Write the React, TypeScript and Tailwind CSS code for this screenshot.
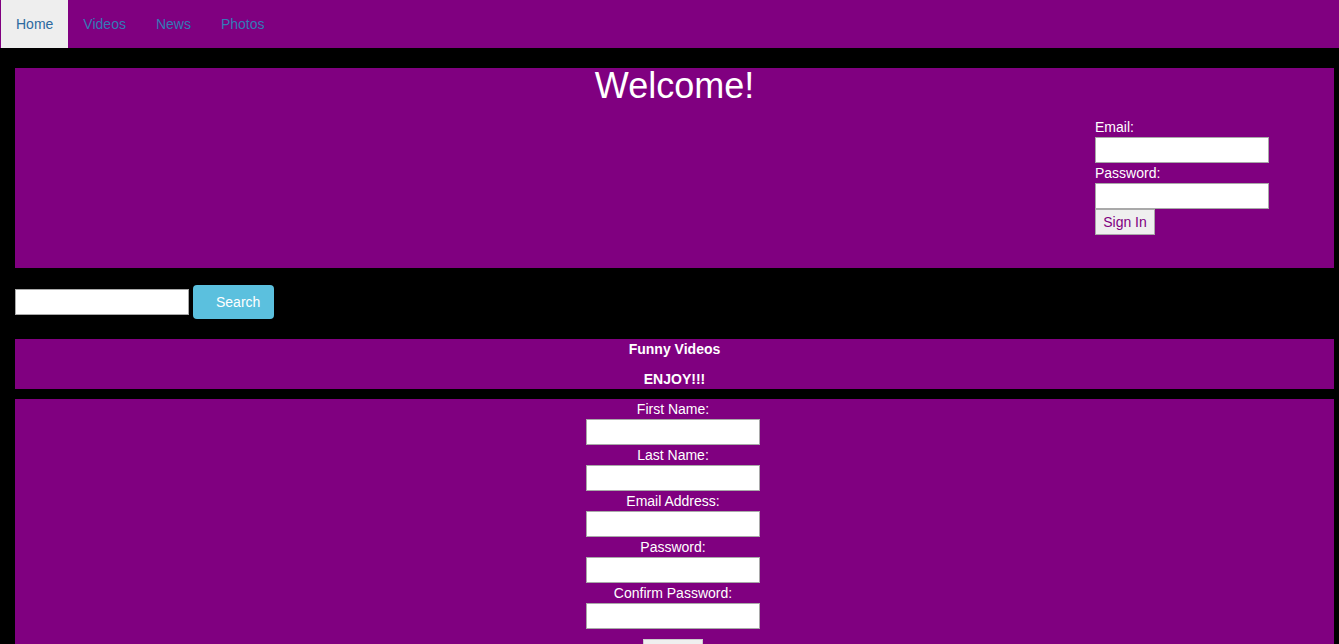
const navItems = ['Home', 'Videos', 'News', 'Photos'];

const signupFields = ['First Name:', 'Last Name:', 'Email Address:', 'Password:', 'Confirm Password:'];

function TextBox({ type = 'text' }: { type?: string }) {
  return (
    <input
      type={type}
      className="block w-[174px] h-[26px] bg-white border border-[#a9a9a9] outline-none px-1 text-black text-[14px]"
    />
  );
}

export default function App() {
  return (
    <div className="min-h-screen bg-black text-white text-[14px] font-['Liberation_Sans',Arial,sans-serif]">
      {/* Top nav */}
      <nav className="h-[48px] bg-[#800080] flex pl-[1px]">
        {navItems.map((item, i) => (
          <a
            key={item}
            href="#"
            className={
              i === 0
                ? 'h-[48px] px-[15px] py-[14px] leading-[20px] bg-[#eeeeee] text-[#2c6aa0]'
                : 'h-[48px] px-[15px] py-[14px] leading-[20px] text-[#337ab7]'
            }
          >
            {item}
          </a>
        ))}
      </nav>

      <main className="pt-[20px] pl-[15px] pr-[5px]">
        {/* Welcome + sign in */}
        <section className="h-[200px] bg-[#800080]">
          <h1 className="text-[36px] leading-[36px] font-normal text-center">Welcome!</h1>
          <div className="flex justify-end pr-[65px] mt-[13px]">
            <form className="w-[174px] flex flex-col items-start">
              <label className="leading-[20px]">Email:</label>
              <TextBox type="email" />
              <label className="leading-[20px]">Password:</label>
              <TextBox type="password" />
              <button
                type="button"
                className="w-[60px] h-[26px] bg-[#efefef] border border-[#a9a9a9] text-[#800080] text-[14px] leading-[20px]"
              >
                Sign In
              </button>
            </form>
          </div>
        </section>

        {/* Search */}
        <div className="mt-[17px] h-[34px] flex items-center gap-[4px]">
          <TextBox />
          <button
            type="button"
            className="w-[81px] h-[34px] rounded-[4px] bg-[#5bc0de] text-white pl-[23px] pr-[14px] text-left leading-[20px]"
          >
            Search
          </button>
        </div>

        {/* Funny videos banner */}
        <section className="mt-[20px] h-[50px] bg-[#800080] text-center font-bold">
          <p className="leading-[20px]">Funny Videos</p>
          <p className="leading-[20px] mt-[10px]">ENJOY!!!</p>
        </section>

        {/* Sign up */}
        <section className="mt-[10px] bg-[#800080] pb-[40px] pr-[3px] flex flex-col items-center">
          {signupFields.map((field) => (
            <div key={field} className="flex flex-col items-center">
              <label className="leading-[20px]">{field}</label>
              <TextBox type={field.includes('Password') ? 'password' : 'text'} />
            </div>
          ))}
          <button
            type="button"
            className="mt-[10px] w-[60px] h-[26px] bg-[#efefef] border border-[#cccccc] text-[#800080] leading-[20px]"
          >
            Sign Up
          </button>
        </section>
      </main>
    </div>
  );
}
